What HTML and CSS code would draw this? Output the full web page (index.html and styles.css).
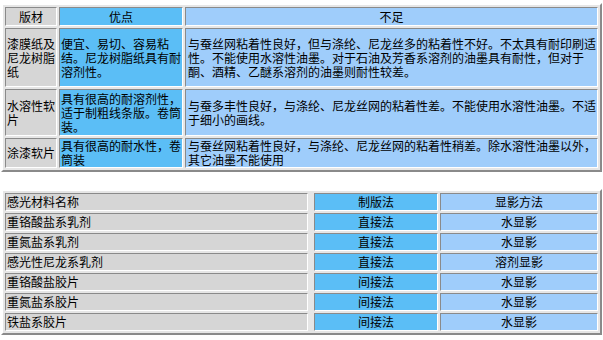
FILE: index.html
```html
<!DOCTYPE html>
<html lang="zh">
<head>
<meta charset="utf-8">
<title>版材与感光材料</title>
<link rel="stylesheet" href="styles.css">
</head>
<body>
<div class="page">
  <table class="grid grid-plates">
    <colgroup>
      <col class="c-name"><col class="c-pro"><col class="c-con">
    </colgroup>
    <tr class="r-head">
      <th class="gray">版材</th>
      <th class="blue">优点</th>
      <th class="lblue">不足</th>
    </tr>
    <tr class="r-1">
      <td class="gray">漆膜纸及<br>尼龙树脂<br>纸</td>
      <td class="blue">便宜、易切、容易粘<br>结。尼龙树脂纸具有耐<br>溶剂性。</td>
      <td class="lblue">与蚕丝网粘着性良好，但与涤纶、尼龙丝多的粘着性不好。不太具有耐印刷适<br>性。不能使用水溶性油墨。对于石油及芳香系溶剂的油墨具有耐性，但对于<br>酮、酒精、乙醚系溶剂的油墨则耐性较差。</td>
    </tr>
    <tr class="r-2">
      <td class="gray">水溶性软<br>片</td>
      <td class="blue">具有很高的耐溶剂性，<br>适于制粗线条版。卷筒<br>装。</td>
      <td class="lblue">与蚕多丰性良好，与涤纶、尼龙丝网的粘着性差。不能使用水溶性油墨。不适<br>于细小的画线。</td>
    </tr>
    <tr class="r-3">
      <td class="gray">涂漆软片</td>
      <td class="blue">具有很高的耐水性，卷<br>筒装</td>
      <td class="lblue">与蚕丝网粘着性良好，与涤纶、尼龙丝网的粘着性稍差。除水溶性油墨以外，<br>其它油墨不能使用</td>
    </tr>
  </table>

  <table class="grid grid-photo">
    <colgroup>
      <col class="p-name"><col class="p-gap"><col class="p-method"><col class="p-dev">
    </colgroup>
    <tr>
      <td class="gray">感光材料名称</td><td class="gap"></td>
      <td class="blue center">制版法</td><td class="lblue center">显影方法</td>
    </tr>
    <tr>
      <td class="gray">重铬酸盐系乳剂</td><td class="gap"></td>
      <td class="blue center">直接法</td><td class="lblue center">水显影</td>
    </tr>
    <tr>
      <td class="gray">重氮盐系乳剂</td><td class="gap"></td>
      <td class="blue center">直接法</td><td class="lblue center">水显影</td>
    </tr>
    <tr>
      <td class="gray">感光性尼龙系乳剂</td><td class="gap"></td>
      <td class="blue center">直接法</td><td class="lblue center">溶剂显影</td>
    </tr>
    <tr>
      <td class="gray">重铬酸盐胶片</td><td class="gap"></td>
      <td class="blue center">间接法</td><td class="lblue center">水显影</td>
    </tr>
    <tr>
      <td class="gray">重氮盐系胶片</td><td class="gap"></td>
      <td class="blue center">间接法</td><td class="lblue center">水显影</td>
    </tr>
    <tr>
      <td class="gray">铁盐系胶片</td><td class="gap"></td>
      <td class="blue center">间接法</td><td class="lblue center">水显影</td>
    </tr>
  </table>
</div>
</body>
</html>
```

FILE: styles.css
```css
html, body {
  margin: 0;
  padding: 0;
  background: #ffffff;
}

.page {
  padding: 3px 0 0 1px;
  font-family: "Noto Sans CJK SC", "Noto Sans", sans-serif;
  font-size: 12px;
  line-height: 14px;
  color: #000;
}

.grid {
  border-collapse: separate;
  border-spacing: 2px;
  table-layout: fixed;
  background: #e6e6e6;
  border: 2px solid;
  border-color: #ffffff #8a8a8a #8a8a8a #ffffff;
}

.grid th,
.grid td {
  box-sizing: border-box;
  border: 1px solid;
  border-color: #8a8a8a #ffffff #ffffff #8a8a8a;
  padding: 0 1px;
  vertical-align: middle;
  text-align: left;
  font-weight: normal;
  overflow: hidden;
}

.grid th,
.grid td.center {
  text-align: center;
}

.gray { background: #d6d6d6; }
.blue { background: #5bbef6; }
.lblue { background: #9fcdfb; }

/* plates table */
.grid-plates { width: 601px; }
.c-name { width: 52px; }
.c-pro { width: 124px; }
.c-con { width: 413px; }

.grid-plates .r-head th { height: 19px; }
.grid-plates .r-1 td { height: 59px; }
.grid-plates .r-2 td { height: 47px; }
.grid-plates .r-3 td { height: 30px; }
.grid-plates td.lblue { padding-left: 2px; }

/* photosensitive table */
.grid-photo {
  margin-top: 17px;
  width: 599px;
}
.p-name { width: 303px; }
.p-gap { width: 2px; }
.p-method { width: 124px; }
.p-dev { width: 158px; }

.grid-photo td { height: 18px; }
.grid-photo td.gap {
  border: 0;
  padding: 0;
  background: transparent;
}
```
